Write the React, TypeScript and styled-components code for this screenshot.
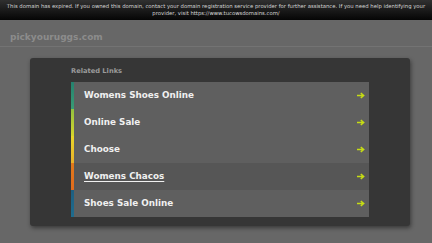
import styled, { createGlobalStyle } from "styled-components";

const GlobalStyle = createGlobalStyle`
  html, body {
    margin: 0;
    padding: 0;
    background: #676767;
    font-family: "DejaVu Sans", Verdana, sans-serif;
  }
`;

const Page = styled.div`
  width: 432px;
  height: 243px;
  overflow: hidden;
  background: #676767;
`;

const Notice = styled.div`
  height: 20px;
  box-sizing: border-box;
  padding-top: 3px;
  background: linear-gradient(#303030, #050505);
  color: #d8d8d8;
  font-size: 5.3px;
  line-height: 7px;
  text-align: center;
`;

const Header = styled.div`
  height: 27px;
  box-sizing: border-box;
  padding: 12px 0 0 10px;
  border-bottom: 1px solid #737373;
  color: #8c8c8c;
  font-size: 9px;
  font-weight: bold;
`;

const Panel = styled.div`
  margin: 11px 0 0 30px;
  width: 380px;
  height: 168px;
  box-sizing: border-box;
  padding: 10px 41px 0 41px;
  background: #363636;
  border-radius: 3px;
  box-shadow: 1px 2px 4px rgba(0, 0, 0, 0.45);
`;

const Title = styled.div`
  color: #9a9a9a;
  font-size: 6.7px;
  font-weight: bold;
  height: 14px;
  line-height: 7px;
`;

const List = styled.div`
  display: flex;
  flex-direction: column;
`;

const Row = styled.a<{ $accent: string; $active?: boolean }>`
  display: flex;
  align-items: center;
  justify-content: space-between;
  height: 26px;
  padding: 0 4px 0 10px;
  border-left: 3px solid transparent;
  border-image: ${(p) => p.$accent} 1;
  border-image-width: 0 0 0 3px;
  border-bottom: 1px solid #545454;
  background: ${(p) => (p.$active ? "#565656" : "#5f5f5f")};
  color: #f0f0f0;
  font-size: 8.8px;
  font-weight: bold;
  text-decoration: ${(p) => (p.$active ? "underline" : "none")};
  text-underline-offset: 2px;
`;

const Arrow = () => (
  <svg width="8" height="7" viewBox="0 0 8 7">
    <path d="M0 3.5 H6 M3.8 1 L6.6 3.5 L3.8 6" stroke="#c6dc14" strokeWidth="1.6" fill="none" />
  </svg>
);

const links = [
  { label: "Womens Shoes Online", accent: "linear-gradient(#24806e, #3a9d75)" },
  { label: "Online Sale", accent: "linear-gradient(#8fc040, #d8d62c)" },
  { label: "Choose", accent: "linear-gradient(#e8d82a, #eab02a)" },
  { label: "Womens Chacos", accent: "linear-gradient(#e07a1c, #e06a1c)", active: true },
  { label: "Shoes Sale Online", accent: "linear-gradient(#1e5e80, #1e6c8e)" },
];

export default function App() {
  return (
    <Page>
      <GlobalStyle />
      <Notice>
        This domain has expired. If you owned this domain, contact your domain registration service provider for further assistance. If you need help identifying your
        <br />
        provider, visit https://www.tucowsdomains.com/
      </Notice>
      <Header>pickyouruggs.com</Header>
      <Panel>
        <Title>Related Links</Title>
        <List>
          {links.map((l) => (
            <Row key={l.label} $accent={l.accent} $active={l.active}>
              <span>{l.label}</span>
              <Arrow />
            </Row>
          ))}
        </List>
      </Panel>
    </Page>
  );
}
